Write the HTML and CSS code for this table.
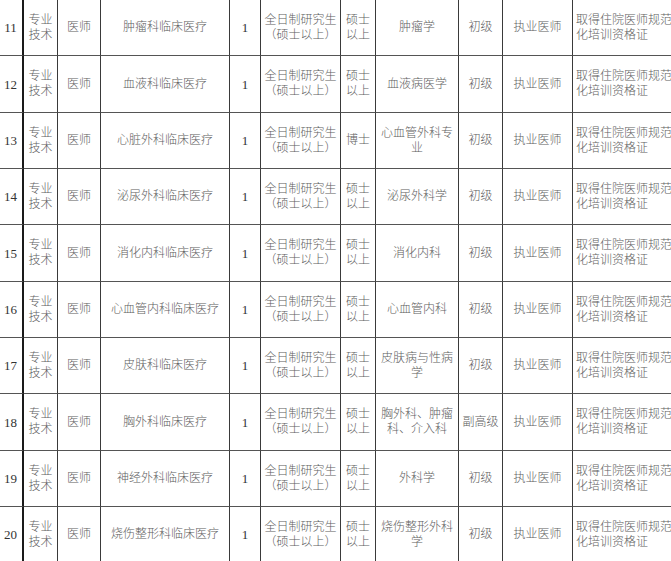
FILE: index.html
```html
<!DOCTYPE html>
<html lang="zh">
<head>
<meta charset="utf-8">
<title>岗位表</title>
<link rel="stylesheet" href="styles.css">
</head>
<body>
<div class="grid">
  <div class="c num">11</div><div class="c">专业<br>技术</div><div class="c">医师</div><div class="c">肿瘤科临床医疗</div><div class="c num">1</div><div class="c">全日制研究生<br>（硕士以上）</div><div class="c">硕士<br>以上</div><div class="c">肿瘤学</div><div class="c">初级</div><div class="c">执业医师</div><div class="c left">取得住院医师规范<br>化培训资格证</div>
  <div class="c num">12</div><div class="c">专业<br>技术</div><div class="c">医师</div><div class="c">血液科临床医疗</div><div class="c num">1</div><div class="c">全日制研究生<br>（硕士以上）</div><div class="c">硕士<br>以上</div><div class="c">血液病医学</div><div class="c">初级</div><div class="c">执业医师</div><div class="c left">取得住院医师规范<br>化培训资格证</div>
  <div class="c num">13</div><div class="c">专业<br>技术</div><div class="c">医师</div><div class="c">心脏外科临床医疗</div><div class="c num">1</div><div class="c">全日制研究生<br>（硕士以上）</div><div class="c">博士</div><div class="c">心血管外科专<br>业</div><div class="c">初级</div><div class="c">执业医师</div><div class="c left">取得住院医师规范<br>化培训资格证</div>
  <div class="c num">14</div><div class="c">专业<br>技术</div><div class="c">医师</div><div class="c">泌尿外科临床医疗</div><div class="c num">1</div><div class="c">全日制研究生<br>（硕士以上）</div><div class="c">硕士<br>以上</div><div class="c">泌尿外科学</div><div class="c">初级</div><div class="c">执业医师</div><div class="c left">取得住院医师规范<br>化培训资格证</div>
  <div class="c num">15</div><div class="c">专业<br>技术</div><div class="c">医师</div><div class="c">消化内科临床医疗</div><div class="c num">1</div><div class="c">全日制研究生<br>（硕士以上）</div><div class="c">硕士<br>以上</div><div class="c">消化内科</div><div class="c">初级</div><div class="c">执业医师</div><div class="c left">取得住院医师规范<br>化培训资格证</div>
  <div class="c num">16</div><div class="c">专业<br>技术</div><div class="c">医师</div><div class="c">心血管内科临床医疗</div><div class="c num">1</div><div class="c">全日制研究生<br>（硕士以上）</div><div class="c">硕士<br>以上</div><div class="c">心血管内科</div><div class="c">初级</div><div class="c">执业医师</div><div class="c left">取得住院医师规范<br>化培训资格证</div>
  <div class="c num">17</div><div class="c">专业<br>技术</div><div class="c">医师</div><div class="c">皮肤科临床医疗</div><div class="c num">1</div><div class="c">全日制研究生<br>（硕士以上）</div><div class="c">硕士<br>以上</div><div class="c">皮肤病与性病<br>学</div><div class="c">初级</div><div class="c">执业医师</div><div class="c left">取得住院医师规范<br>化培训资格证</div>
  <div class="c num">18</div><div class="c">专业<br>技术</div><div class="c">医师</div><div class="c">胸外科临床医疗</div><div class="c num">1</div><div class="c">全日制研究生<br>（硕士以上）</div><div class="c">硕士<br>以上</div><div class="c">胸外科、肿瘤<br>科、介入科</div><div class="c">副高级</div><div class="c">执业医师</div><div class="c left">取得住院医师规范<br>化培训资格证</div>
  <div class="c num">19</div><div class="c">专业<br>技术</div><div class="c">医师</div><div class="c">神经外科临床医疗</div><div class="c num">1</div><div class="c">全日制研究生<br>（硕士以上）</div><div class="c">硕士<br>以上</div><div class="c">外科学</div><div class="c">初级</div><div class="c">执业医师</div><div class="c left">取得住院医师规范<br>化培训资格证</div>
  <div class="c num">20</div><div class="c">专业<br>技术</div><div class="c">医师</div><div class="c">烧伤整形科临床医疗</div><div class="c num">1</div><div class="c">全日制研究生<br>（硕士以上）</div><div class="c">硕士<br>以上</div><div class="c">烧伤整形外科<br>学</div><div class="c">初级</div><div class="c">执业医师</div><div class="c left">取得住院医师规范<br>化培训资格证</div>
</div>
</body>
</html>
```
FILE: styles.css
```css
html, body {
  margin: 0;
  padding: 0;
  background: #ffffff;
  overflow: hidden;
  width: 671px;
  height: 561px;
}
.grid {
  display: grid;
  grid-template-columns: 24px 34px 43px 129px 31px 80px 35px 83px 44px 70px 99px;
  grid-template-rows: 56px 57px 56px 56px 57px 56px 56px 57px 56px 56px;
  width: 671px;
  font-family: "Liberation Serif", "Noto Sans CJK SC", serif;
  font-size: 12px;
  font-weight: 300;
  line-height: 15px;
  color: #5e5e5e;
}
.c {
  box-sizing: border-box;
  border-right: 1px solid #3a3a3a;
  border-bottom: 1px solid #555555;
  display: flex;
  align-items: center;
  justify-content: center;
  text-align: center;
  white-space: nowrap;
  overflow: hidden;
}
.c:nth-child(11n+1) {
  border-right: 2px solid #1a1a1a;
  padding-right: 1px;
}
.c:nth-child(11n) {
  border-right: none;
}
.num {
  font-size: 13px;
  font-weight: 400;
  color: #333333;
}
.left {
  justify-content: flex-start;
  text-align: left;
  padding-left: 3px;
}
```
